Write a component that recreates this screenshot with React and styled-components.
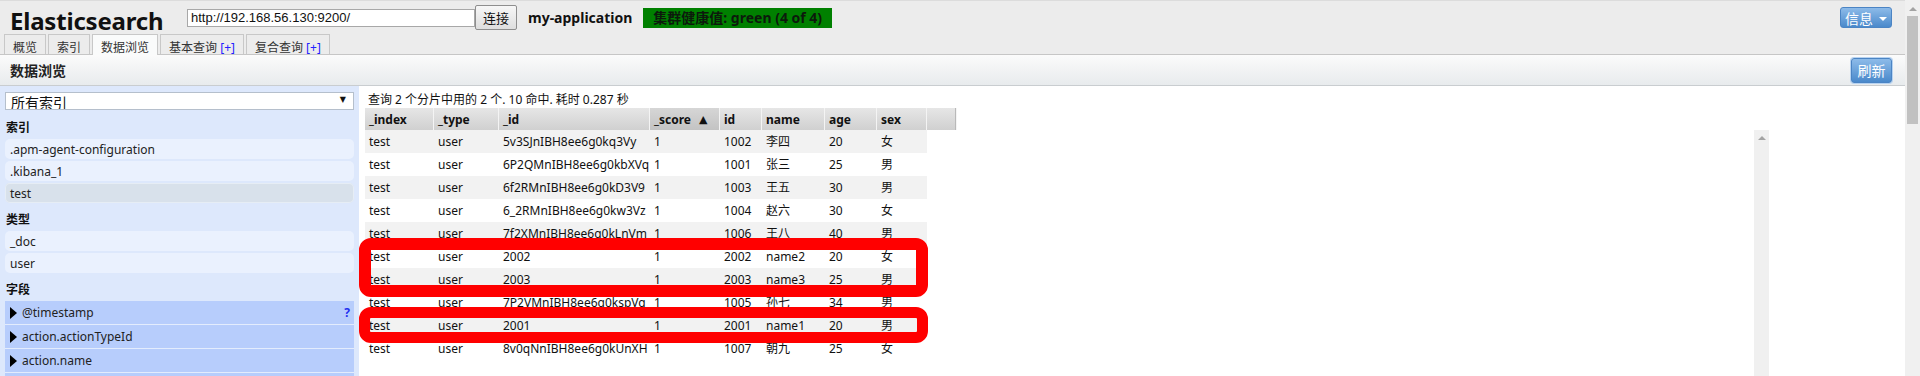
import React from "react";
import styled, { createGlobalStyle, css } from "styled-components";

const GlobalStyle = createGlobalStyle`
  html, body {
    margin: 0;
    padding: 0;
    height: 376px;
    overflow: hidden;
    background: #fff;
  }
  body {
    font-family: "Noto Sans", "Noto Sans CJK SC", sans-serif;
    font-size: 12px;
    color: #222;
  }
  * { box-sizing: border-box; }
`;

const columns = [
  { key: "_index", w: 69 },
  { key: "_type", w: 65 },
  { key: "_id", w: 151 },
  { key: "_score", w: 70, sorted: true },
  { key: "id", w: 42 },
  { key: "name", w: 63 },
  { key: "age", w: 52 },
  { key: "sex", w: 50 },
];

const rows = [
  ["test", "user", "5v3SJnIBH8ee6g0kq3Vy", "1", "1002", "李四", "20", "女"],
  ["test", "user", "6P2QMnIBH8ee6g0kbXVq", "1", "1001", "张三", "25", "男"],
  ["test", "user", "6f2RMnIBH8ee6g0kD3V9", "1", "1003", "王五", "30", "男"],
  ["test", "user", "6_2RMnIBH8ee6g0kw3Vz", "1", "1004", "赵六", "30", "女"],
  ["test", "user", "7f2XMnIBH8ee6g0kLnVm", "1", "1006", "王八", "40", "男"],
  ["test", "user", "2002", "1", "2002", "name2", "20", "女"],
  ["test", "user", "2003", "1", "2003", "name3", "25", "男"],
  ["test", "user", "7P2VMnIBH8ee6g0kspVg", "1", "1005", "孙七", "34", "男"],
  ["test", "user", "2001", "1", "2001", "name1", "20", "男"],
  ["test", "user", "8v0qNnIBH8ee6g0kUnXH", "1", "1007", "朝九", "25", "女"],
];

const fields = ["@timestamp", "action.actionTypeId", "action.name", "action.tags"];

const Shell = styled.div`
  display: flex;
  width: 1920px;
  height: 376px;
  overflow: hidden;
`;

const Page = styled.div`
  flex: 1;
  min-width: 0;
  display: flex;
  flex-direction: column;
`;

/* ---------- header ---------- */

const Header = styled.div`
  height: 55px;
  flex-shrink: 0;
  background: #ececec;
  border-top: 1px solid #dcdcdc;
  border-bottom: 1px solid #c6c6c6;
  display: flex;
  flex-direction: column;
`;

const TopRow = styled.div`
  height: 33px;
  display: flex;
  align-items: center;
  padding: 0 13px 0 10px;
`;

const Logo = styled.h1`
  width: 177px;
  margin: 6px 0 0;
  font-size: 24px;
  line-height: 24px;
  font-weight: 700;
  color: #111;
  letter-spacing: -0.2px;
`;

const UrlInput = styled.div`
  width: 288px;
  height: 18px;
  border: 1px solid #a8a8a8;
  background: #fff;
  padding: 0 3px;
  font-family: "Liberation Sans", Arial, sans-serif;
  font-size: 13px;
  line-height: 16px;
  color: #111;
`;

const ConnectButton = styled.button`
  width: 42px;
  height: 25px;
  padding: 0;
  border: 1px solid #8e8e8e;
  border-radius: 2px;
  background: linear-gradient(#f7f7f7, #dedede);
  font-family: "Noto Sans CJK SC", sans-serif;
  font-size: 13px;
  color: #111;
`;

const AppName = styled.span`
  margin-left: 11px;
  font-size: 14px;
  font-weight: 700;
  color: #111;
`;

const Health = styled.span`
  margin-left: 11px;
  height: 20px;
  padding: 0 10px;
  background: #008000;
  font-size: 14px;
  font-weight: 700;
  line-height: 20px;
  color: #0c1a0c;
`;

const BlueButton = styled.button`
  margin-left: auto;
  height: ${(p) => p.$h}px;
  width: ${(p) => p.$w}px;
  padding: 0;
  border: 1px solid #4b84c4;
  border-radius: 3px;
  background: linear-gradient(#8dbbe9, #4a89cb);
  color: #fff;
  font-family: "Noto Sans CJK SC", sans-serif;
  font-size: 14px;
  line-height: 1;
  display: flex;
  align-items: center;
  justify-content: center;
  gap: 6px;
  ${(p) =>
    p.$focus &&
    css`
      box-shadow: 0 0 0 1px #b7d3f1;
    `}
`;

const Caret = styled.span`
  width: 0;
  height: 0;
  border-left: 4px solid transparent;
  border-right: 4px solid transparent;
  border-top: 4px solid #fff;
  margin-top: 2px;
`;

const TabRow = styled.div`
  height: 20px;
  display: flex;
  align-items: flex-end;
  gap: 2px;
  padding-left: 4px;
`;

const Tab = styled.div`
  position: relative;
  height: ${(p) => (p.$active ? 21 : 20)}px;
  margin-bottom: ${(p) => (p.$active ? -1 : 0)}px;
  padding: 5px 8px 0;
  border: 1px solid #c8c8c8;
  border-bottom: none;
  background: ${(p) => (p.$active ? "#fafbfb" : "#ececec")};
  font-family: "Noto Sans CJK SC", sans-serif;
  font-size: 12px;
  line-height: 14px;
  color: #333;
  white-space: nowrap;
`;

const Plus = styled.span`
  color: #2222ff;
  font-family: "Noto Sans", sans-serif;
`;

/* ---------- section bar ---------- */

const SectionBar = styled.div`
  height: 31px;
  flex-shrink: 0;
  display: flex;
  align-items: center;
  padding: 0 13px 0 10px;
  background: linear-gradient(#fbfbfb, #e8ebed);
  border-bottom: 1px solid #c9cdd0;
`;

const SectionTitle = styled.div`
  font-size: 14px;
  font-weight: 700;
  color: #222;
`;

/* ---------- body ---------- */

const Body = styled.div`
  flex: 1;
  min-height: 0;
  display: flex;
`;

const Sidebar = styled.div`
  width: 359px;
  flex-shrink: 0;
  background: #dde8fc;
  padding: 6px 5px 0;
  overflow: hidden;
`;

const SelectBox = styled.div`
  height: 18px;
  margin-bottom: 3px;
  background: #fff;
  border: 1px solid #b5bfcc;
  padding: 0 5px;
  display: flex;
  justify-content: space-between;
  overflow: hidden;
  font-family: "Noto Sans CJK SC", sans-serif;
  font-size: 14px;
  line-height: 19px;
  color: #111;
`;

const SelectArrow = styled.span`
  font-family: "DejaVu Sans", sans-serif;
  font-size: 8px;
  line-height: 14px;
  margin-right: 2px;
`;

const SideHeading = styled.div`
  height: 26px;
  padding-left: 1px;
  font-family: "Noto Sans CJK SC", sans-serif;
  font-size: 12px;
  font-weight: 700;
  line-height: 28px;
  color: #111;
`;

const SideItem = styled.div`
  height: 20px;
  margin-bottom: 2px;
  padding: 0 5px;
  border-radius: 5px;
  background: ${(p) => (p.$selected ? "#d8e1eb" : "#eaf1fe")};
  box-shadow: ${(p) => (p.$selected ? "inset 0 0 0 1px #e6edf5" : "none")};
  font-size: 12px;
  line-height: 21px;
  color: #222;
`;

const FieldRow = styled.div`
  height: 24px;
  display: flex;
  align-items: center;
  padding: 0 4px 0 5px;
  background: #b7cdfc;
  border-bottom: 1px solid #e3ecfd;
  font-size: 12px;
  color: #222;
`;

const Expander = styled.span`
  width: 0;
  height: 0;
  border-top: 6px solid transparent;
  border-bottom: 6px solid transparent;
  border-left: 7px solid #000;
  margin-right: 5px;
`;

const Help = styled.span`
  margin-left: auto;
  font-weight: 700;
  color: #1f2ff0;
`;

const Main = styled.div`
  flex: 1;
  min-width: 0;
  padding: 4px 0 0 6px;
  display: flex;
  flex-direction: column;
`;

const QueryInfo = styled.div`
  height: 18px;
  padding-left: 3px;
  font-size: 12px;
  line-height: 20px;
  color: #111;
`;

const HeadRow = styled.div`
  display: flex;
  height: 22px;
`;

const HeadCell = styled.div`
  width: ${(p) => p.$w}px;
  height: 22px;
  padding: 0 4px;
  display: flex;
  align-items: center;
  border-right: 1px solid #f4f4f4;
  background: ${(p) =>
    p.$sorted
      ? "linear-gradient(#d6d6d6, #c3c3c3)"
      : "linear-gradient(#e6e6e6, #d0d0d0)"};
  font-size: 12px;
  font-weight: 700;
  color: #111;
  white-space: nowrap;
  ${(p) =>
    p.$last &&
    css`
      box-shadow: inset -1px 0 0 #b9b9b9;
    `}
`;

const SortMark = styled.span`
  margin-left: 8px;
  font-family: "DejaVu Sans", sans-serif;
  font-size: 11px;
  font-weight: 400;
`;

const ScrollArea = styled.div`
  flex: 1;
  min-height: 0;
  display: flex;
  width: 1404px;
`;

const RowsPane = styled.div`
  position: relative;
  flex: 1;
`;

const Row = styled.div`
  display: flex;
  width: 562px;
  height: 23px;
  background: ${(p) => (p.$odd ? "#f2f2f2" : "#fff")};
`;

const Cell = styled.div`
  width: ${(p) => p.$w}px;
  padding: 0 4px;
  font-size: 12px;
  line-height: 23px;
  color: #111;
  white-space: nowrap;
  overflow: hidden;
`;

const Scrollbar = styled.div`
  width: 15px;
  flex-shrink: 0;
  background: #f0f0f0;
  display: flex;
  flex-direction: column;
  align-items: center;
`;

const UpArrow = styled.span`
  width: 0;
  height: 0;
  margin-top: ${(p) => p.$top}px;
  border-left: 4px solid transparent;
  border-right: 4px solid transparent;
  border-bottom: 4px solid #a3a3a3;
`;

const Thumb = styled.div`
  width: 11px;
  height: 108px;
  margin-top: 5px;
  background: #c1c1c1;
`;

const Mark = styled.div`
  position: absolute;
  left: -6px;
  top: ${(p) => p.$top}px;
  width: 569px;
  height: ${(p) => p.$h}px;
  border: ${(p) => p.$b}px solid #ff0000;
  border-radius: 12px;
  pointer-events: none;
`;

const App = () => {
  const tabs = [
    { label: "概览" },
    { label: "索引" },
    { label: "数据浏览", active: true },
    { label: "基本查询", plus: true },
    { label: "复合查询", plus: true },
  ];

  return (
    <Shell>
      <GlobalStyle />
      <Page>
        <Header>
          <TopRow>
            <Logo>Elasticsearch</Logo>
            <UrlInput>http://192.168.56.130:9200/</UrlInput>
            <ConnectButton>连接</ConnectButton>
            <AppName>my-application</AppName>
            <Health>集群健康值: green (4 of 4)</Health>
            <BlueButton $w={52} $h={21}>
              信息 <Caret />
            </BlueButton>
          </TopRow>
          <TabRow>
            {tabs.map((t) => (
              <Tab key={t.label} $active={t.active}>
                {t.label}
                {t.plus && <Plus> [+]</Plus>}
              </Tab>
            ))}
          </TabRow>
        </Header>

        <SectionBar>
          <SectionTitle>数据浏览</SectionTitle>
          <BlueButton $w={41} $h={25} $focus>
            刷新
          </BlueButton>
        </SectionBar>

        <Body>
          <Sidebar>
            <SelectBox>
              <span>所有索引</span>
              <SelectArrow>▼</SelectArrow>
            </SelectBox>
            <SideHeading>索引</SideHeading>
            <SideItem>.apm-agent-configuration</SideItem>
            <SideItem>.kibana_1</SideItem>
            <SideItem $selected>test</SideItem>
            <SideHeading>类型</SideHeading>
            <SideItem>_doc</SideItem>
            <SideItem>user</SideItem>
            <SideHeading>字段</SideHeading>
            {fields.map((f, i) => (
              <FieldRow key={f}>
                <Expander />
                {f}
                {i === 0 && <Help>?</Help>}
              </FieldRow>
            ))}
          </Sidebar>

          <Main>
            <QueryInfo>查询 2 个分片中用的 2 个. 10 命中. 耗时 0.287 秒</QueryInfo>
            <HeadRow>
              {columns.map((c) => (
                <HeadCell key={c.key} $w={c.w} $sorted={c.sorted}>
                  {c.key}
                  {c.sorted && <SortMark>▲</SortMark>}
                </HeadCell>
              ))}
              <HeadCell $w={30} $last />
            </HeadRow>
            <ScrollArea>
              <RowsPane>
                {rows.map((r, i) => (
                  <Row key={i} $odd={i % 2 === 0}>
                    {r.map((v, j) => (
                      <Cell key={j} $w={columns[j].w}>
                        {v}
                      </Cell>
                    ))}
                  </Row>
                ))}
                <Mark $top={108} $h={59} $b={12} />
                <Mark $top={177} $h={36} $b={11} />
              </RowsPane>
              <Scrollbar>
                <UpArrow $top={6} />
              </Scrollbar>
            </ScrollArea>
          </Main>
        </Body>
      </Page>
      <Scrollbar>
        <UpArrow $top={7} />
        <Thumb />
      </Scrollbar>
    </Shell>
  );
};

export default App;
